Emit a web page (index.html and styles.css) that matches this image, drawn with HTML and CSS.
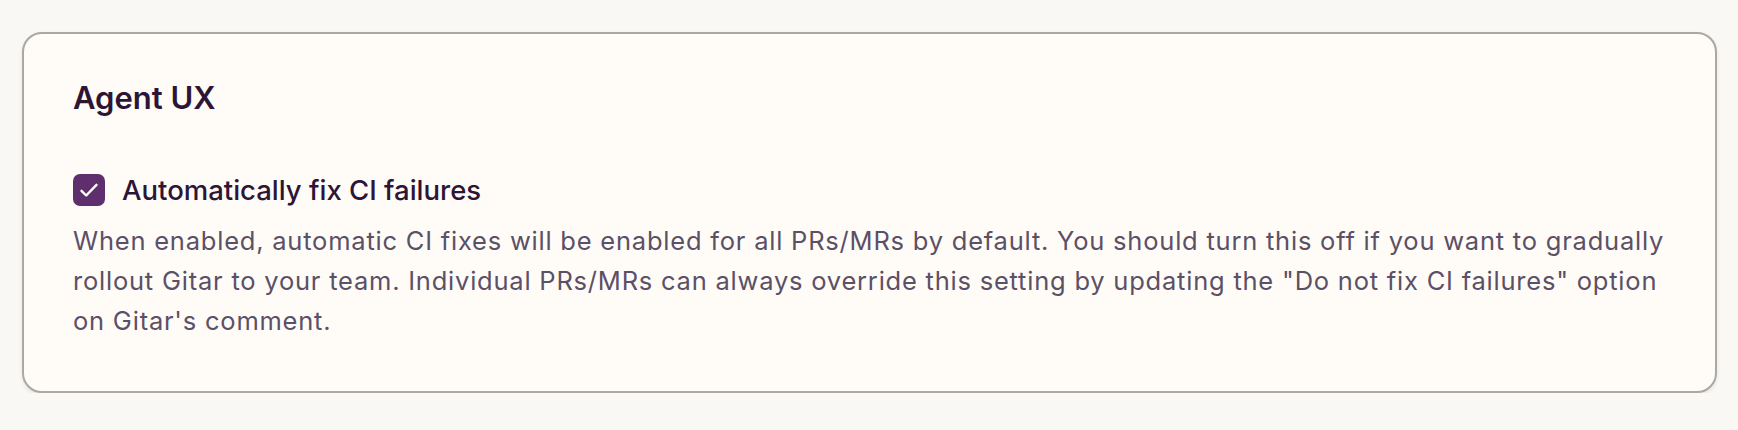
FILE: index.html
```html
<!DOCTYPE html>
<html lang="en">

<head>
    <meta charset="UTF-8">
    <title>Settings</title>

    <link rel="stylesheet" href="styles.css">
</head>

<body>
    <div class="card">
        <h2 class="card-title">Agent UX</h2>

        <label class="option">
            <span class="check">
                <svg width="32" height="32" viewBox="0 0 32 32" fill="none">
                    <path d="M8.5 16.8 L13.2 21.5 L23.5 10.8" stroke="#fff" stroke-width="2.4" stroke-linecap="round" stroke-linejoin="round" />
                </svg>
            </span>
            <span class="option-label">Automatically fix CI failures</span>
        </label>

        <p class="hint">When enabled, automatic CI fixes will be enabled for all PRs/MRs by default. You should turn this off if you want to gradually rollout Gitar to your team. Individual PRs/MRs can always override this setting by updating the "Do not fix CI failures" option on Gitar's comment.</p>
    </div>
</body>

</html>
```

FILE: styles.css
```css
body {
    font-family: Inter, "Noto Sans", sans-serif;
    background-color: #f9f8f5;
    margin: 0;
    padding: 32px 21px 0 22px;
}

.card {
    background-color: #fffcf8;
    border: 2px solid #aaa7a5;
    border-radius: 20px;
    box-shadow: 0px 2px 4px rgba(0, 0, 0, 0.08);
    padding: 46px 48px 50px 49px;
}

.card-title {
    font-size: 31px;
    font-weight: 600;
    line-height: 36px;
    color: #2d1535;
    margin: 0 0 58px 0;
}

.option {
    display: flex;
    align-items: center;
    gap: 17px;
    height: 32px;
}

.check {
    width: 32px;
    height: 32px;
    border-radius: 7px;
    background-color: #5f2e6d;
    display: flex;
}

.option-label {
    font-size: 27.5px;
    font-weight: 500;
    color: #2d1535;
}

.hint {
    font-size: 25.5px;
    letter-spacing: 0.78px;
    line-height: 40px;
    color: #5b5066;
    margin: 15px 0 0 0;
}
```
